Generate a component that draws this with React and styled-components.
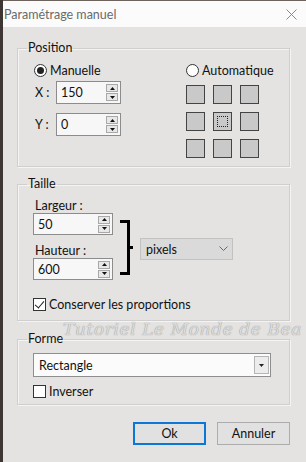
import styled, { createGlobalStyle } from "styled-components";

const GlobalStyle = createGlobalStyle`
  html, body {
    margin: 0;
    padding: 0;
    background: #e4e3e1;
  }
  body {
    font-family: Lato, "Noto Sans", sans-serif;
  }
`;

const App = () => {
  return (
    <Window>
      <GlobalStyle />
      <TitleBar>
        <Title>Paramétrage manuel</Title>
        <CloseIcon width="11" height="11" viewBox="0 0 11 11">
          <path d="M0.5 0.5 L10.5 10.5 M10.5 0.5 L0.5 10.5" stroke="#8a8a8a" strokeWidth="1" fill="none" />
        </CloseIcon>
      </TitleBar>
      <Body>
        <Group $pb={8}>
          <Legend>Position</Legend>
          <PositionRow>
            <LeftColumn>
              <RadioRow>
                <Radio $checked />
                <span>Manuelle</span>
              </RadioRow>
              <FieldRow $mt={3}>
                <FieldLabel>X :</FieldLabel>
                <SpinBox $w={65} $h={23} value="150" />
              </FieldRow>
              <FieldRow $mt={9}>
                <FieldLabel>Y :</FieldLabel>
                <SpinBox $w={65} $h={23} value="0" />
              </FieldRow>
            </LeftColumn>
            <RightColumn>
              <RadioRow>
                <Radio />
                <span>Automatique</span>
              </RadioRow>
              <AnchorGrid>
                {[0, 1, 2, 3, 4, 5, 6, 7, 8].map((i) => (
                  <Cell key={i} $active={i === 4} />
                ))}
              </AnchorGrid>
            </RightColumn>
          </PositionRow>
        </Group>

        <Group $mt={8} $pb={8} $pl={15}>
          <Legend $ml={-6}>Taille</Legend>
          <SizeRow>
            <SizeInputs>
              <SizeLabel>Largeur :</SizeLabel>
              <SpinBox $w={80} $h={22} value="50" />
              <SizeLabel $mt={8}>Hauteur :</SizeLabel>
              <SpinBox $w={80} $h={22} value="600" />
            </SizeInputs>
            <Bracket width="27" height="82" viewBox="0 0 27 82">
              <path d="M7 23.5 H15.5 V75.5 H7 M15.5 49.5 H20" stroke="#000" strokeWidth="3" fill="none" />
            </Bracket>
            <UnitSelect>
              <span>pixels</span>
              <svg width="9" height="6" viewBox="0 0 9 6">
                <path d="M0.5 0.5 L4.5 4.5 L8.5 0.5" stroke="#6a6a6a" strokeWidth="1" fill="none" />
              </svg>
            </UnitSelect>
          </SizeRow>
          <CheckRow $mt={16}>
            <CheckBox $checked />
            <span>Conserver les proportions</span>
          </CheckRow>
        </Group>

        <Group $mt={9} $pb={5} $pl={15}>
          <Legend $ml={-6}>Forme</Legend>
          <ShapeSelect>
            <span>Rectangle</span>
            <DropButton>
              <svg width="5" height="3" viewBox="0 0 5 3">
                <path d="M0 0 H5 L2.5 3 Z" fill="#222" />
              </svg>
            </DropButton>
          </ShapeSelect>
          <CheckRow $mt={6}>
            <CheckBox />
            <span>Inverser</span>
          </CheckRow>
        </Group>

        <Footer>
          <Button $primary>Ok</Button>
          <Button>Annuler</Button>
        </Footer>
      </Body>
      <Watermark>Tutoriel Le Monde de Bea</Watermark>
    </Window>
  );
};

const SpinBox = ({ value, $w, $h }) => (
  <SpinField $w={$w} $h={$h}>
    <SpinValue>{value}</SpinValue>
    <SpinButtons>
      <SpinButton>
        <svg width="5" height="3" viewBox="0 0 5 3">
          <path d="M0 3 H5 L2.5 0 Z" fill="#111" />
        </svg>
      </SpinButton>
      <SpinButton>
        <svg width="5" height="3" viewBox="0 0 5 3">
          <path d="M0 0 H5 L2.5 3 Z" fill="#111" />
        </svg>
      </SpinButton>
    </SpinButtons>
  </SpinField>
);

const Window = styled.div`
  position: relative;
  width: 306px;
  height: 462px;
  box-sizing: border-box;
  border-left: 3px solid #3d3633;
  background: #e4e3e1;
  color: #111;
  font-size: 12.5px;
  overflow: hidden;
`;

const TitleBar = styled.div`
  display: flex;
  align-items: center;
  justify-content: space-between;
  height: 27px;
  padding: 0 9px 0 1px;
  background: #fbfbfb;
  border-top: 1px solid #6e625c;
  box-sizing: border-box;
`;

const Title = styled.div`
  font-size: 12.5px;
  color: #6a6a6a;
`;

const CloseIcon = styled.svg`
  display: block;
`;

const Body = styled.div`
  padding: 12px 16px 0 14px;
`;

const Group = styled.fieldset`
  margin: ${(p) => p.$mt || 0}px 0 0 0;
  padding: 5px 12px ${(p) => p.$pb}px ${(p) => p.$pl || 16}px;
  border: 1px solid #cfcfcf;
  box-shadow: inset 1px 1px 0 #f4f4f4, 1px 1px 0 #f4f4f4;
  min-width: 0;
`;

const Legend = styled.legend`
  margin-left: ${(p) => (p.$ml !== undefined ? p.$ml : -7)}px;
  padding: 0 1px;
  font-size: 12.5px;
  line-height: 18px;
  color: #111;
`;

const PositionRow = styled.div`
  display: flex;
`;

const LeftColumn = styled.div`
  width: 152px;
`;

const RightColumn = styled.div`
  display: flex;
  flex-direction: column;
`;

const RadioRow = styled.div`
  display: flex;
  align-items: center;
  gap: 3px;
  height: 16px;
  font-size: 12.5px;
`;

const Radio = styled.span`
  position: relative;
  width: 13px;
  height: 13px;
  box-sizing: border-box;
  border: 1px solid #333;
  border-radius: 50%;
  background: #fff;
  &::after {
    content: "";
    position: absolute;
    left: 2px;
    top: 2px;
    width: 7px;
    height: 7px;
    border-radius: 50%;
    background: #222;
    display: ${(p) => (p.$checked ? "block" : "none")};
  }
`;

const FieldRow = styled.div`
  display: flex;
  align-items: center;
  margin-top: ${(p) => p.$mt}px;
`;

const FieldLabel = styled.span`
  width: 21px;
  padding-left: 1px;
  font-size: 12.5px;
`;

const SpinField = styled.div`
  display: flex;
  align-items: center;
  justify-content: space-between;
  width: ${(p) => p.$w}px;
  height: ${(p) => p.$h}px;
  box-sizing: border-box;
  border: 1px solid #8c8c8c;
  background: #f7f7f7;
  padding: 0 2px 0 4px;
`;

const SpinValue = styled.span`
  font-size: 12.5px;
`;

const SpinButtons = styled.div`
  display: flex;
  flex-direction: column;
  gap: 1px;
`;

const SpinButton = styled.div`
  display: flex;
  align-items: center;
  justify-content: center;
  width: 12px;
  height: 8px;
  box-sizing: border-box;
  border: 1px solid #a8a8a8;
  background: #e8e8e8;
  svg {
    display: block;
  }
`;

const AnchorGrid = styled.div`
  display: grid;
  grid-template-columns: repeat(3, 19px);
  grid-auto-rows: 19px;
  gap: 8px;
  margin-top: 7px;
`;

const Cell = styled.div`
  box-sizing: border-box;
  border: 1px solid #444;
  background: #c9c9c9;
  position: relative;
  &::after {
    content: "";
    position: absolute;
    inset: 3px;
    border: 1px dotted #222;
    display: ${(p) => (p.$active ? "block" : "none")};
  }
`;

const SizeRow = styled.div`
  display: flex;
  align-items: flex-start;
`;

const SizeInputs = styled.div`
  display: flex;
  flex-direction: column;
  width: 80px;
`;

const SizeLabel = styled.span`
  line-height: 15px;
  padding-left: 2px;
  margin-top: ${(p) => p.$mt || 0}px;
  font-size: 12.5px;
`;

const Bracket = styled.svg`
  display: block;
  flex: none;
`;

const UnitSelect = styled.div`
  display: flex;
  align-items: center;
  justify-content: space-between;
  width: 93px;
  height: 22px;
  margin-top: 40px;
  box-sizing: border-box;
  padding: 0 4px 0 5px;
  border: 1px solid #c2c2c2;
  background: #dadada;
  font-size: 12.5px;
`;

const CheckRow = styled.div`
  display: flex;
  align-items: center;
  gap: 3px;
  height: 16px;
  margin-top: ${(p) => p.$mt}px;
  font-size: 12.5px;
`;

const CheckBox = styled.span`
  position: relative;
  width: 13px;
  height: 13px;
  box-sizing: border-box;
  border: 1px solid #333;
  background: #fff;
  &::after {
    content: "";
    position: absolute;
    left: 3px;
    top: 0px;
    width: 4px;
    height: 8px;
    border: solid #222;
    border-width: 0 1.5px 1.5px 0;
    transform: rotate(40deg);
    display: ${(p) => (p.$checked ? "block" : "none")};
  }
`;

const ShapeSelect = styled.div`
  display: flex;
  align-items: center;
  justify-content: space-between;
  width: 238px;
  height: 24px;
  box-sizing: border-box;
  padding: 0 1px 0 5px;
  border: 1px solid #8f8f8f;
  background: #fbfbfb;
  font-size: 12.5px;
`;

const DropButton = styled.div`
  display: flex;
  align-items: center;
  justify-content: center;
  width: 15px;
  height: 18px;
  box-sizing: border-box;
  border: 1px solid #b5b5b5;
  background: #ececec;
  svg {
    display: block;
  }
`;

const Footer = styled.div`
  display: flex;
  justify-content: flex-end;
  gap: 11px;
  margin-top: 17px;
`;

const Button = styled.button`
  width: 73px;
  height: 23px;
  box-sizing: border-box;
  padding: 0;
  border: ${(p) => (p.$primary ? "2px solid #0a78d4" : "1px solid #adadad")};
  background: #e1e1e1;
  font-family: Lato, "Noto Sans", sans-serif;
  font-size: 12.5px;
  color: #111;
`;

const Watermark = styled.div`
  position: absolute;
  left: 60px;
  top: 319px;
  font-family: "DejaVu Serif", "Liberation Serif", serif;
  font-style: italic;
  font-size: 17px;
  letter-spacing: 0.6px;
  color: #dcdcdc;
  text-shadow: 0 0 1px #7e7e7e;
  white-space: nowrap;
  pointer-events: none;
`;

export default App;
